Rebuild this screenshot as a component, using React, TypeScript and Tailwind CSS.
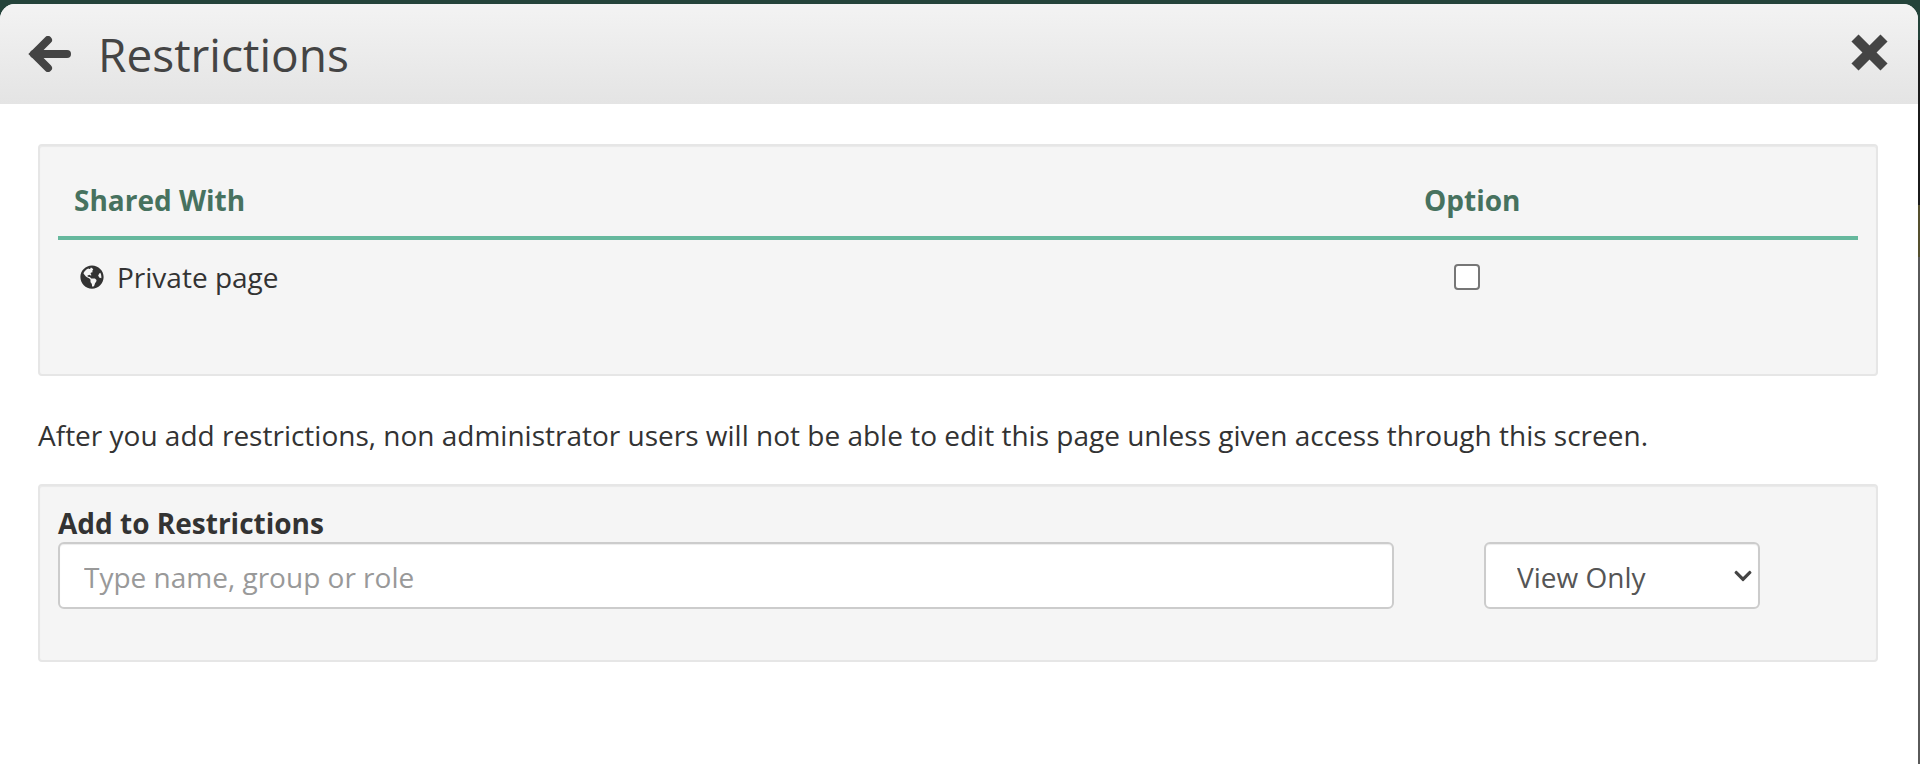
import React from "react";
import { FaGlobeAmericas, FaChevronDown } from "react-icons/fa";

function BackArrow() {
    return (
        <svg viewBox="0 0 43 36" className="w-[43px] h-[36px] shrink-0" fill="none" stroke="#444" strokeWidth="8" strokeLinecap="round">
            <path d="M20 4 L6 18 L20 32" />
            <path d="M6 18 H39" />
        </svg>
    )
}

function CloseIcon() {
    return (
        <svg viewBox="0 0 37 37" className="w-[37px] h-[37px] shrink-0 mb-[3px]" fill="none" stroke="#444" strokeWidth="10">
            <path d="M4 4 L33 33" />
            <path d="M33 4 L4 33" />
        </svg>
    )
}

export default function App() {
    return (
        <div className="h-[764px] overflow-hidden bg-[linear-gradient(to_bottom,#24433a_0,#24433a_40px,#1b1b1b_40px,#1b1b1b_205px,#55502f_205px,#55502f_257px,#5a5a5a_257px)] pr-[2px] font-['Open_Sans',sans-serif]">
            <div className="h-1 -mr-[2px] bg-[#24433a]" />
            <div className="h-[760px] bg-white rounded-t-[15px]">
                <div className="flex items-center h-[100px] rounded-t-[15px] bg-gradient-to-b from-[#f3f3f3] to-[#e4e4e4] pl-[28px] pr-[30px] text-[#444]">
                    <BackArrow />
                    <h1 className="ml-[27px] grow text-[46px] leading-none">Restrictions</h1>
                    <CloseIcon />
                </div>
                <div className="px-[38px] pt-[40px] pr-[40px]">
                    <div className="h-[232px] rounded border-2 border-[#e6e6e6] bg-[#f5f5f5] shadow-[inset_0_1px_1px_rgba(0,0,0,0.05)] px-[18px]">
                        <div className="flex items-center h-[94px] pt-[18px] border-b-4 border-[#66b89d] text-[28px] font-bold text-[#47725f]">
                            <div className="w-[1366px] pl-[16px]">Shared With</div>
                            <div>Option</div>
                        </div>
                        <div className="flex items-center pt-[16px]">
                            <div className="flex items-center w-[1396px] pl-[22px] text-[28px] text-[#333]">
                                <FaGlobeAmericas className="text-[24px]" />
                                <span className="ml-[13px]">Private page</span>
                            </div>
                            <input type="checkbox" className="appearance-none w-[26px] h-[26px] rounded-[4px] border-2 border-[#767676] bg-white" />
                        </div>
                    </div>
                    <p className="mt-[40px] text-[28px] leading-[38px] text-[#333]">After you add restrictions, non administrator users will not be able to edit this page unless given access through this screen.</p>
                    <div className="mt-[30px] h-[178px] rounded border-2 border-[#e6e6e6] bg-[#f5f5f5] shadow-[inset_0_1px_1px_rgba(0,0,0,0.05)] px-[18px] pt-[18px]">
                        <label className="block text-[28px] font-bold leading-[38px] text-[#333]">Add to Restrictions</label>
                        <div className="flex">
                            <input
                                placeholder="Type name, group or role"
                                className="w-[1336px] h-[67px] rounded-md border-2 border-[#ccc] bg-white shadow-[inset_0_1px_1px_rgba(0,0,0,0.075)] pt-[2px] px-[24px] text-[28px] text-[#555] placeholder:text-[#999]"
                            />
                            <div className="relative ml-[90px] w-[276px]">
                                <select className="appearance-none w-full h-[67px] rounded-md border-2 border-[#ccc] bg-white shadow-[inset_0_1px_1px_rgba(0,0,0,0.075)] pt-[2px] pl-[31px] text-[28px] text-[#555]">
                                    <option>View Only</option>
                                </select>
                                <FaChevronDown className="absolute right-[7px] top-[24px] text-[20px] text-[#444]" />
                            </div>
                        </div>
                    </div>
                </div>
            </div>
        </div>
    )
}
